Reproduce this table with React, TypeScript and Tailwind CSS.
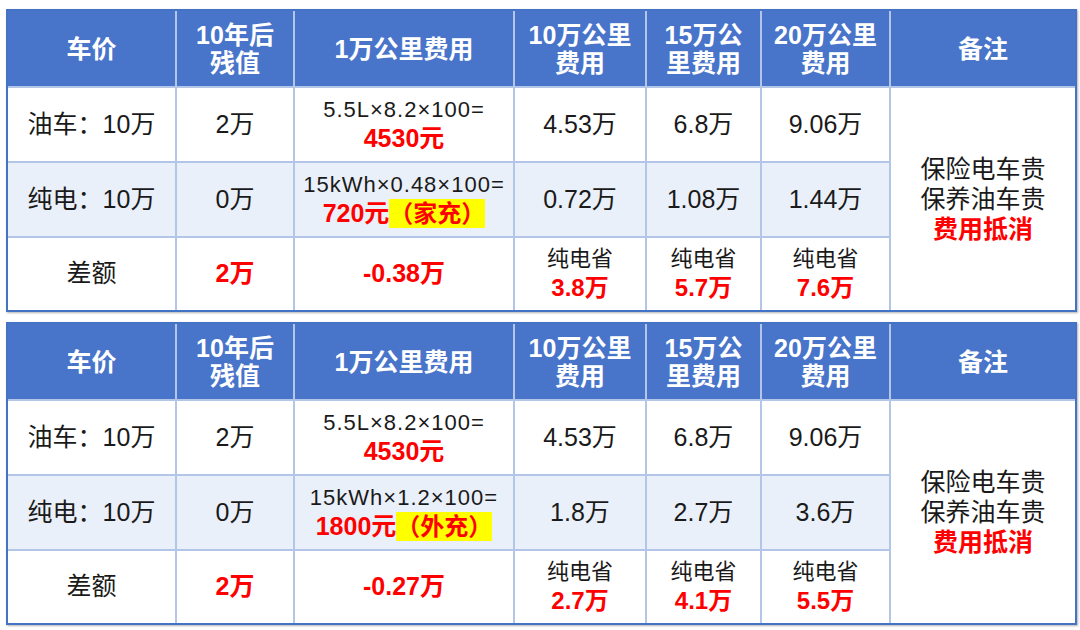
import React from "react";

type Data = {
  formula: string;
  cost: string;
  tag: string;
  ev: string[];
  diff: string;
  save: string[];
};

const tables: Data[] = [
  {
    formula: "15kWh×0.48×100=",
    cost: "720元",
    tag: "（家充）",
    ev: ["0.72万", "1.08万", "1.44万"],
    diff: "-0.38万",
    save: ["3.8万", "5.7万", "7.6万"],
  },
  {
    formula: "15kWh×1.2×100=",
    cost: "1800元",
    tag: "（外充）",
    ev: ["1.8万", "2.7万", "3.6万"],
    diff: "-0.27万",
    save: ["2.7万", "4.1万", "5.5万"],
  },
];

const th =
  "border-2 border-[#b4c6e7] bg-[#4874ca] text-white font-bold text-[25px] leading-[28px] text-center align-middle p-0";
const td = "border-2 border-[#b4c6e7] text-center align-middle p-0";
const red = "text-[#ff0000] font-bold";

function CompareTable({ d }: { d: Data }) {
  return (
    <div className="w-[1071px] border-2 border-[#4472c4] bg-white shadow-[1px_1px_2px_rgba(0,0,0,0.3)]">
      <table className="w-full table-fixed border-collapse border-hidden">
        <colgroup>
          <col className="w-[168px]" />
          <col className="w-[118px]" />
          <col className="w-[220px]" />
          <col className="w-[132px]" />
          <col className="w-[115px]" />
          <col className="w-[129px]" />
          <col />
        </colgroup>
        <thead>
          <tr className="h-[76px]">
            <th className={th}>车价</th>
            <th className={th}>
              10年后
              <br />
              残值
            </th>
            <th className={th}>1万公里费用</th>
            <th className={th}>
              10万公里
              <br />
              费用
            </th>
            <th className={th}>
              15万公
              <br />
              里费用
            </th>
            <th className={th}>
              20万公里
              <br />
              费用
            </th>
            <th className={th}>备注</th>
          </tr>
        </thead>
        <tbody className="text-[25px] text-[#1a1a1a]">
          <tr className="h-[75px]">
            <td className={td}>油车：10万</td>
            <td className={td}>2万</td>
            <td className={td}>
              <div className="text-[22px] leading-[27px] tracking-[1px]">5.5L×8.2×100=</div>
              <div className={`${red} text-[25px] leading-[30px]`}>4530元</div>
            </td>
            <td className={td}>4.53万</td>
            <td className={td}>6.8万</td>
            <td className={td}>9.06万</td>
            <td className={`${td} bg-white leading-[30px]`} rowSpan={3}>
              <div>保险电车贵</div>
              <div>保养油车贵</div>
              <div className={red}>费用抵消</div>
            </td>
          </tr>
          <tr className="h-[75px] bg-[#eaf0f9]">
            <td className={td}>纯电：10万</td>
            <td className={td}>0万</td>
            <td className={td}>
              <div className="text-[22px] leading-[27px] tracking-[1px]">{d.formula}</div>
              <div className={`${red} text-[25px] leading-[30px]`}>
                {d.cost}
                <span className="bg-[#ffff00] py-px text-[24px]">{d.tag}</span>
              </div>
            </td>
            {d.ev.map((v) => (
              <td key={v} className={td}>
                {v}
              </td>
            ))}
          </tr>
          <tr className="h-[73px]">
            <td className={td}>差额</td>
            <td className={`${td} ${red}`}>2万</td>
            <td className={`${td} ${red}`}>{d.diff}</td>
            {d.save.map((v) => (
              <td key={v} className={td}>
                <div className="text-[22px] leading-[28px]">纯电省</div>
                <div className={`${red} text-[24px] leading-[30px]`}>{v}</div>
              </td>
            ))}
          </tr>
        </tbody>
      </table>
    </div>
  );
}

export default function App() {
  return (
    <div className="w-[1080px] h-[630px] bg-white pt-[9px] pl-[6px] flex flex-col gap-[10px] font-['Liberation_Sans','Noto_Sans_CJK_SC',sans-serif]">
      {tables.map((d) => (
        <CompareTable key={d.cost} d={d} />
      ))}
    </div>
  );
}
